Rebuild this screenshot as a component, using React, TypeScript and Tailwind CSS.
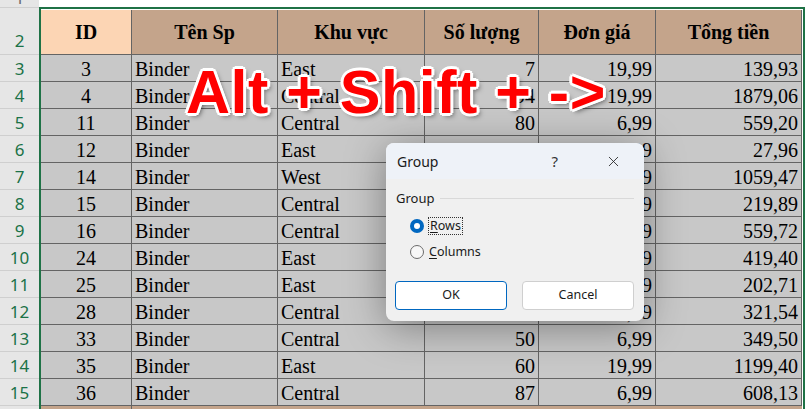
import { X } from 'lucide-react';

type Row = {
  n: number;
  id: string;
  name: string;
  area: string;
  qty: string;
  price: string;
  total: string;
};

const rows: Row[] = [
  { n: 3, id: '3', name: 'Binder', area: 'East', qty: '7', price: '19,99', total: '139,93' },
  { n: 4, id: '4', name: 'Binder', area: 'Central', qty: '94', price: '19,99', total: '1879,06' },
  { n: 5, id: '11', name: 'Binder', area: 'Central', qty: '80', price: '6,99', total: '559,20' },
  { n: 6, id: '12', name: 'Binder', area: 'East', qty: '4', price: '6,99', total: '27,96' },
  { n: 7, id: '14', name: 'Binder', area: 'West', qty: '53', price: '19,99', total: '1059,47' },
  { n: 8, id: '15', name: 'Binder', area: 'Central', qty: '11', price: '19,99', total: '219,89' },
  { n: 9, id: '16', name: 'Binder', area: 'Central', qty: '28', price: '19,99', total: '559,72' },
  { n: 10, id: '24', name: 'Binder', area: 'East', qty: '60', price: '6,99', total: '419,40' },
  { n: 11, id: '25', name: 'Binder', area: 'East', qty: '29', price: '6,99', total: '202,71' },
  { n: 12, id: '28', name: 'Binder', area: 'Central', qty: '46', price: '6,99', total: '321,54' },
  { n: 13, id: '33', name: 'Binder', area: 'Central', qty: '50', price: '6,99', total: '349,50' },
  { n: 14, id: '35', name: 'Binder', area: 'East', qty: '60', price: '19,99', total: '1199,40' },
  { n: 15, id: '36', name: 'Binder', area: 'Central', qty: '87', price: '6,99', total: '608,13' },
];

const cell = 'h-[27px] border-r border-b border-[#646464] flex items-end pb-[1px] leading-[22px]';

export default function App() {
  return (
    <div className="relative w-[809px] h-[409px] overflow-hidden bg-white font-['Liberation_Serif',serif] text-[20px] text-black">
      <div className="flex">
        {/* Row headers */}
        <div className="w-[39px] shrink-0 bg-[#e6e6e6] font-['Noto_Sans',sans-serif] text-[17px] text-[#1b7247]">
          <div className="h-[8px] overflow-hidden border-b border-[#cfcfcf] flex items-end justify-center text-[#6a6a6a] leading-[18px]">
            1
          </div>
          <div className="h-[47px] border-b border-[#cfcfcf] flex items-end justify-center leading-[22px] pb-[2px]">
            2
          </div>
          {rows.map(r => (
            <div key={r.n} className="h-[27px] border-b border-[#cfcfcf] flex items-end justify-center leading-[22px] pb-[1px]">
              {r.n}
            </div>
          ))}
          <div className="h-[27px]" />
        </div>

        {/* Sheet */}
        <div className="flex-1">
          <div className="h-[7px] bg-white" />
          <div className="w-[766px] border-t-2 border-l-2 border-r-2 border-[#1f7246] pt-[1px] pr-[1px] bg-white">
            <div className="flex h-[45px] font-bold">
              <div className="w-[91px] border-r border-b border-[#646464] bg-[#fcd5b4] flex items-center justify-center">ID</div>
              <div className="w-[146px] border-r border-b border-[#646464] bg-[#c4a48b] flex items-center justify-center">Tên Sp</div>
              <div className="w-[147px] border-r border-b border-[#646464] bg-[#c4a48b] flex items-center justify-center">Khu vực</div>
              <div className="w-[114px] border-r border-b border-[#646464] bg-[#c4a48b] flex items-center justify-center">Số lượng</div>
              <div className="w-[117px] border-r border-b border-[#646464] bg-[#c4a48b] flex items-center justify-center">Đơn giá</div>
              <div className="w-[146px] border-r border-b border-[#646464] bg-[#c4a48b] flex items-center justify-center">Tổng tiền</div>
            </div>
            {rows.map(r => (
              <div key={r.n} className="flex bg-[#c8c8c8]">
                <div className={`${cell} w-[91px] justify-center`}>{r.id}</div>
                <div className={`${cell} w-[146px] pl-[3px]`}>{r.name}</div>
                <div className={`${cell} w-[147px] pl-[3px]`}>{r.area}</div>
                <div className={`${cell} w-[114px] justify-end pr-[3px]`}>{r.qty}</div>
                <div className={`${cell} w-[117px] justify-end pr-[3px]`}>{r.price}</div>
                <div className={`${cell} w-[146px] justify-end pr-[3px]`}>{r.total}</div>
              </div>
            ))}
            <div className="flex h-[27px] bg-[#c4a48b]">
              <div className="w-[91px] border-r border-[#646464]" />
            </div>
          </div>
        </div>
      </div>

      {/* Shortcut caption */}
      <div className="absolute left-[186px] top-[57px] whitespace-nowrap font-['Liberation_Sans',Arial,sans-serif] font-bold text-[61px] leading-[70px] tracking-[0.5px] text-[#ff0000] [text-shadow:3px_0_0_#fff,-3px_0_0_#fff,0_3px_0_#fff,0_-3px_0_#fff,2px_2px_0_#fff,-2px_2px_0_#fff,2px_-2px_0_#fff,-2px_-2px_0_#fff,3px_3px_5px_rgba(0,0,0,0.55)]">
        Alt + Shift + -&gt;
      </div>

      {/* Group dialog */}
      <div className="absolute left-[386px] top-[143px] w-[258px] h-[178px] rounded-[8px] overflow-hidden bg-[#f0f0f0] shadow-[0_6px_40px_rgba(0,0,0,0.38)] font-['Noto_Sans',sans-serif] text-[12.5px] text-[#1a1a1a]">
        <div className="h-[36px] bg-[#eef2f8] flex items-center pl-[11px] pr-[22px]">
          <span className="text-[14px]">Group</span>
          <span className="ml-auto mr-[47px] text-[15px] text-[#333]">?</span>
          <X size={17} strokeWidth={1.2} className="text-[#222]" />
        </div>
        <div className="px-[10px] pt-[10px]">
          <div className="flex items-center gap-[6px]">
            <span className="text-[13px]">Group</span>
            <div className="flex-1 h-px bg-[#d9d9d9]" />
          </div>
          <div className="mt-[8px] pl-[14px] flex flex-col gap-[9px]">
            <div className="flex items-center gap-[4px]">
              <div className="w-[14px] h-[14px] rounded-full bg-[#0067c0] flex items-center justify-center">
                <div className="w-[6px] h-[6px] rounded-full bg-white" />
              </div>
              <span className="border border-dotted border-[#333] px-[1px] leading-[16px]">
                <span className="underline underline-offset-2">R</span>ows
              </span>
            </div>
            <div className="flex items-center gap-[5px]">
              <div className="w-[14px] h-[14px] rounded-full border border-[#6b6b6b] bg-[#f7f7f7]" />
              <span className="leading-[16px]">
                <span className="underline underline-offset-2">C</span>olumns
              </span>
            </div>
          </div>
          <div className="mt-[21px] -ml-[1px] flex gap-[15px]">
            <div className="w-[112px] h-[29px] rounded-[4px] bg-white border border-[#0067c0] flex items-center justify-center">OK</div>
            <div className="w-[112px] h-[29px] rounded-[4px] bg-white border border-[#cfcfcf] flex items-center justify-center">Cancel</div>
          </div>
        </div>
      </div>
    </div>
  );
}
